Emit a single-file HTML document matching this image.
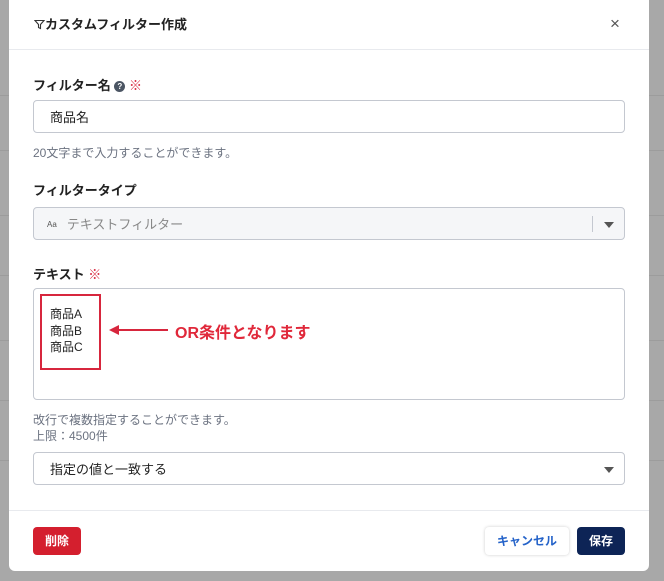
<!DOCTYPE html>
<html><head><meta charset="utf-8"><style>
*{box-sizing:border-box;margin:0;padding:0}
body{width:664px;height:581px;background:#a8a8a8;font-family:"Liberation Sans","Noto Sans CJK JP",sans-serif;position:relative;overflow:hidden;color:#222}
.bgl{position:absolute;left:0;right:0;height:1px;background:#9c9c9c}
.m{position:absolute;left:9px;top:-6px;width:640px;height:577px;background:#fff;border-radius:6px}
.a{position:absolute}
.lbl{font-size:13px;font-weight:bold;color:#222}
.help{font-size:12px;color:#6b7280}
.inp{position:absolute;left:24px;width:592px;border:1px solid #c4c8d0;border-radius:4px;background:#fff}
.tri{position:absolute;width:0;height:0;border-left:5px solid transparent;border-right:5px solid transparent;border-top:6px solid #555}
.btn{position:absolute;height:28px;border-radius:4px;font-size:12px;font-weight:bold;text-align:center;line-height:28px}
</style></head><body>
<div class="bgl" style="top:95px"></div><div class="bgl" style="top:150px"></div><div class="bgl" style="top:215px"></div><div class="bgl" style="top:275px"></div><div class="bgl" style="top:340px"></div><div class="bgl" style="top:400px"></div><div class="bgl" style="top:460px"></div>
<div class="m">
 <div class="a" style="left:25px;top:20px;font-size:13px;font-weight:bold">
  <svg width="11" height="11" viewBox="0 0 11 11" style="vertical-align:-1px"><path d="M1 1.5H10L6.5 5.5V9.5L4.5 8.5V5.5Z" fill="none" stroke="#333" stroke-width="1.1"/></svg>カスタムフィルター作成</div>
 <div class="a" style="left:601px;top:20px;font-size:17px;color:#555">×</div>
 <div class="a" style="left:0;right:0;top:55px;height:1px;background:#e8eaee"></div>
 <div class="a lbl" style="left:24px;top:81px">フィルター名 <span style="display:inline-block;width:11px;height:11px;border-radius:50%;background:#4b5563;color:#fff;font-size:8px;line-height:11px;text-align:center;vertical-align:1px">?</span> <span style="color:#d7263d;font-weight:normal">※</span></div>
 <div class="inp" style="top:106px;height:33px;font-size:13px;padding:6px 0 0 16px">商品名</div>
 <div class="a help" style="left:24px;top:150px">20文字まで入力することができます。</div>
 <div class="a lbl" style="left:24px;top:186px">フィルタータイプ</div>
 <div class="inp" style="top:213px;height:33px;background:#f5f6f8;font-size:13px;color:#888;padding:6px 0 0 13px"><span style="font-size:8px;color:#555;margin-right:10px;vertical-align:2px">Aa</span>テキストフィルター
  <div class="a" style="left:558px;top:8px;width:1px;height:16px;background:#c4c8d0"></div>
  <div class="tri" style="left:570px;top:14px"></div></div>
 <div class="a lbl" style="left:24px;top:270px">テキスト <span style="color:#d7263d;font-weight:normal">※</span></div>
 <div class="inp" style="top:294px;height:112px"></div>
 <div class="a" style="left:31px;top:300px;width:61px;height:76px;border:2px solid #d7263d"></div>
 <div class="a" style="left:41px;top:312px;font-size:12px;line-height:16.5px">商品A<br>商品B<br>商品C</div>
 <svg class="a" style="left:99px;top:330px" width="62" height="12"><path d="M10 6H60" stroke="#d7263d" stroke-width="2"/><path d="M1 6L11 1V11Z" fill="#d7263d"/></svg>
 <div class="a" style="left:166px;top:325px;font-size:16px;font-weight:bold;color:#e0283a">OR条件となります</div>
 <div class="a help" style="left:24px;top:418px;line-height:16px">改行で複数指定することができます。<br>上限：4500件</div>
 <div class="inp" style="top:458px;height:33px;font-size:13px;padding:6px 0 0 16px">指定の値と一致する<div class="tri" style="left:570px;top:14px"></div></div>
 <div class="a" style="left:0;right:0;top:516px;height:1px;background:#e8eaee"></div>
 <div class="btn" style="left:24px;top:533px;width:48px;background:#d41f2e;color:#fff">削除</div>
 <div class="btn" style="left:476px;top:533px;width:84px;background:#fff;color:#2563c9;box-shadow:0 0 3px rgba(0,0,0,.2)">キャンセル</div>
 <div class="btn" style="left:568px;top:533px;width:48px;background:#0d2456;color:#fff">保存</div>
</div>
</body></html>
